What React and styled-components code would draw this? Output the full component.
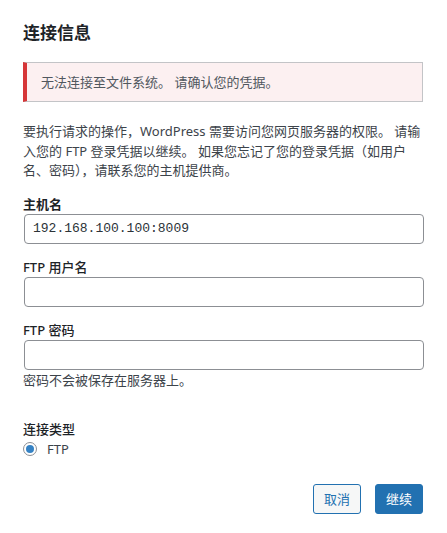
import styled, { createGlobalStyle } from "styled-components";

const GlobalStyle = createGlobalStyle`
  html, body {
    margin: 0;
    padding: 0;
    background: #ffffff;
  }
  body {
    font-family: "Noto Sans", "Noto Sans CJK SC", sans-serif;
    font-size: 13px;
    color: #3c434a;
  }
`;

const Dialog = styled.form`
  width: 400px;
  padding: 0 24px 20px 23px;
  display: flex;
  flex-direction: column;
`;

const Title = styled.h2`
  margin: 22px 0 0;
  font-size: 17px;
  line-height: 22px;
  font-weight: 700;
  color: #1d2327;
`;

const Notice = styled.div`
  margin-top: 18px;
  background: #fcf0f1;
  border: 1px solid #c3c4c7;
  border-left: 4px solid #d63638;
  padding: 9px 14px;
  line-height: 20px;
  color: #50575e;
`;

const Intro = styled.p`
  margin: 20px 0 0;
  line-height: 19.5px;
  color: #3c434a;
`;

const Fields = styled.div`
  margin-top: 14px;
  display: flex;
  flex-direction: column;
  gap: 14px;
`;

const Field = styled.label`
  display: flex;
  flex-direction: column;
`;

const Label = styled.span`
  line-height: 19px;
  font-weight: ${(p) => (p.$heavy ? 700 : 500)};
  color: #1d2327;
`;

const Input = styled.input`
  box-sizing: border-box;
  width: 400px;
  height: 30px;
  margin-left: 1px;
  border: 1px solid #8c8f94;
  border-radius: 4px;
  padding: 0 8px;
  font-family: "Liberation Mono", "DejaVu Sans Mono", monospace;
  font-size: 13px;
  color: #2c3338;
  background: #ffffff;
  outline: none;
`;

const Hint = styled.p`
  margin: 1px 0 0;
  line-height: 18px;
  color: #3c434a;
`;

const Group = styled.fieldset`
  margin: 31px 0 0;
  padding: 0;
  border: 0;
`;

const Legend = styled.div`
  line-height: 18px;
  font-weight: 500;
  color: #1d2327;
`;

const RadioRow = styled.label`
  display: flex;
  align-items: center;
  gap: 10px;
  height: 22px;
  color: #3c434a;
`;

const Radio = styled.span`
  box-sizing: border-box;
  width: 14px;
  height: 14px;
  border: 1px solid #8c8f94;
  border-radius: 50%;
  display: flex;
  align-items: center;
  justify-content: center;
  &::after {
    content: "";
    width: 8px;
    height: 8px;
    border-radius: 50%;
    background: #3582c4;
  }
`;

const Actions = styled.div`
  margin-top: 24px;
  display: flex;
  justify-content: flex-end;
  gap: 14px;
`;

const Button = styled.button`
  height: 30px;
  padding: 0 10px;
  border-radius: 3px;
  border: 1px solid #2271b1;
  font-family: "Noto Sans", "Noto Sans CJK SC", sans-serif;
  font-size: 13px;
  cursor: pointer;
  background: ${(p) => (p.$primary ? "#2271b1" : "#f6f7f7")};
  color: ${(p) => (p.$primary ? "#ffffff" : "#2271b1")};
`;

export default function App() {
  return (
    <>
      <GlobalStyle />
      <Dialog onSubmit={(e) => e.preventDefault()}>
        <Title>连接信息</Title>
        <Notice>无法连接至文件系统。 请确认您的凭据。</Notice>
        <Intro>
          要执行请求的操作，WordPress 需要访问您网页服务器的权限。 请输入您的 FTP
          登录凭据以继续。 如果您忘记了您的登录凭据（如用户名、密码），请联系您的主机提供商。
        </Intro>
        <Fields>
          <Field>
            <Label $heavy>主机名</Label>
            <Input defaultValue="192.168.100.100:8009" />
          </Field>
          <Field>
            <Label>FTP 用户名</Label>
            <Input />
          </Field>
          <div>
            <Field>
              <Label>FTP 密码</Label>
              <Input type="password" />
            </Field>
            <Hint>密码不会被保存在服务器上。</Hint>
          </div>
        </Fields>
        <Group>
          <Legend>连接类型</Legend>
          <RadioRow>
            <Radio />
            FTP
          </RadioRow>
        </Group>
        <Actions>
          <Button type="button">取消</Button>
          <Button type="submit" $primary>
            继续
          </Button>
        </Actions>
      </Dialog>
    </>
  );
}
